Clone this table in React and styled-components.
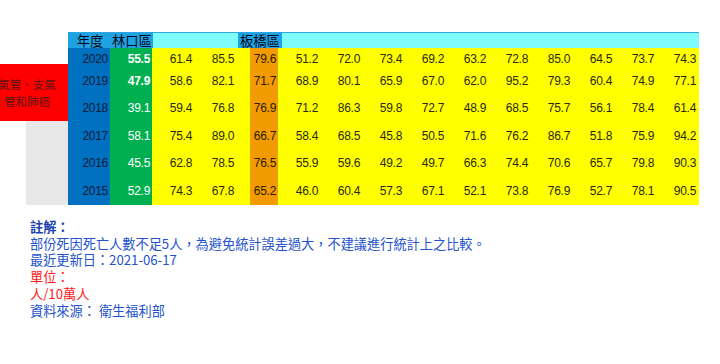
import styled, { createGlobalStyle } from 'styled-components'

const GlobalStyle = createGlobalStyle`
  body {
    margin: 0;
    background: #ffffff;
  }
`

const rows = [
  { year: 2020, lin: '55.5', bold: true, pre: ['61.4', '85.5'], ban: '79.6', rest: ['51.2', '72.0', '73.4', '69.2', '63.2', '72.8', '85.0', '64.5', '73.7', '74.3'], h: 21 },
  { year: 2019, lin: '47.9', bold: true, pre: ['58.6', '82.1'], ban: '71.7', rest: ['68.9', '80.1', '65.9', '67.0', '62.0', '95.2', '79.3', '60.4', '74.9', '77.1'], h: 24 },
  { year: 2018, lin: '39.1', pre: ['59.4', '76.8'], ban: '76.9', rest: ['71.2', '86.3', '59.8', '72.7', '48.9', '68.5', '75.7', '56.1', '78.4', '61.4'], h: 30 },
  { year: 2017, lin: '58.1', pre: ['75.4', '89.0'], ban: '66.7', rest: ['58.4', '68.5', '45.8', '50.5', '71.6', '76.2', '86.7', '51.8', '75.9', '94.2'], h: 26 },
  { year: 2016, lin: '45.5', pre: ['62.8', '78.5'], ban: '76.5', rest: ['55.9', '59.6', '49.2', '49.7', '66.3', '74.4', '70.6', '65.7', '79.8', '90.3'], h: 28 },
  { year: 2015, lin: '52.9', pre: ['74.3', '67.8'], ban: '65.2', rest: ['46.0', '60.4', '57.3', '67.1', '52.1', '73.8', '76.9', '52.7', '78.1', '90.5'], h: 28 },
]

const cellColors = {
  year: { bg: '#0070c0', fg: '#0d1a3a' },
  lin: { bg: '#00b050', fg: '#ffffff' },
  ban: { bg: '#f29b00', fg: '#2a1a00' },
  data: { bg: 'transparent', fg: '#2a2a10' },
}

export default function App() {
  return (
    <>
      <GlobalStyle />
      <Page>
        <Chart>
          <Side>
            <CauseBox>
              <span>氣管、支氣</span>
              <span>管和肺癌</span>
            </CauseBox>
            <GrayBox />
          </Side>
          <Table>
            <HeaderBar>
              <HeaderLabel width="85px">
                <HeadCell width="42px" center>年度</HeadCell>
                <HeadCell width="43px">林口區</HeadCell>
              </HeaderLabel>
              <HeaderGap width="85px" />
              <HeaderLabel width="44px">
                <HeadCell width="44px">板橋區</HeadCell>
              </HeaderLabel>
            </HeaderBar>
            <Body>
              {rows.map((r) => (
                <Row key={r.year} h={r.h}>
                  <Cell kind="year">{r.year}</Cell>
                  <Cell kind="lin" bold={r.bold}>{r.lin}</Cell>
                  {r.pre.map((v, i) => (
                    <Cell kind="data" key={'p' + i}>{v}</Cell>
                  ))}
                  <Spacer />
                  <Cell kind="ban">{r.ban}</Cell>
                  {r.rest.map((v, i) => (
                    <Cell kind="data" key={'r' + i}>{v}</Cell>
                  ))}
                </Row>
              ))}
            </Body>
          </Table>
        </Chart>
        <Notes>
          <NoteLine strong>註解：</NoteLine>
          <NoteLine>部份死因死亡人數不足5人，為避免統計誤差過大，不建議進行統計上之比較。</NoteLine>
          <NoteLine>最近更新日：2021-06-17</NoteLine>
          <NoteLine red>單位：</NoteLine>
          <NoteLine red>人/10萬人</NoteLine>
          <NoteLine>資料來源： 衛生福利部</NoteLine>
        </Notes>
      </Page>
    </>
  )
}

const Page = styled.div`
  width: 720px;
  height: 364px;
  overflow: hidden;
  font-family: 'Noto Sans CJK TC', 'Noto Sans', sans-serif;
`

const Chart = styled.div`
  display: flex;
  align-items: flex-start;
`

const Side = styled.div`
  width: 68px;
  padding-top: 64px;
  display: flex;
  flex-direction: column;
  align-items: flex-end;
`

const CauseBox = styled.div`
  width: 68px;
  height: 57px;
  background: #ff0000;
  overflow: hidden;
  box-sizing: border-box;
  padding-right: 14px;
  display: flex;
  flex-direction: column;
  align-items: center;
  justify-content: center;
  gap: 2px;
  font-size: 11.5px;
  line-height: 15px;
  color: #5c1414;
  white-space: nowrap;
`

const GrayBox = styled.div`
  width: 42px;
  height: 84px;
  background: #e8e8e8;
`

const Table = styled.div`
  padding-top: 32px;
  width: 631px;
`

const HeaderBar = styled.div`
  display: flex;
  height: 16px;
  background: #80fbfb;
  border-top: 1px solid #2aa6e0;
  box-sizing: border-box;
`

const HeaderLabel = styled.div`
  display: flex;
  width: ${(p) => p.width};
  background: #1fa2e2;
`

const HeaderGap = styled.div`
  width: ${(p) => p.width};
`

const HeadCell = styled.div`
  width: ${(p) => p.width};
  font-size: 13.3px;
  line-height: 15px;
  color: #0a0a20;
  text-align: ${(p) => (p.center ? 'center' : 'left')};
  padding-left: ${(p) => (p.center ? '2px' : '2px')};
  box-sizing: border-box;
  white-space: nowrap;
`

const Body = styled.div`
  background: #ffff00;
  display: flex;
  flex-direction: column;
`

const Row = styled.div`
  display: grid;
  grid-template-columns: 42px 42px 42px 42px 14px 28px repeat(10, 42px);
  height: ${(p) => p.h}px;
`

const Spacer = styled.div``

const Cell = styled.div`
  background: ${(p) => cellColors[p.kind].bg};
  color: ${(p) => cellColors[p.kind].fg};
  font-family: 'Liberation Sans', Arial, sans-serif;
  font-size: 12px;
  letter-spacing: -0.3px;
  font-weight: ${(p) => (p.bold ? 700 : 400)};
  display: flex;
  align-items: center;
  justify-content: flex-end;
  padding-right: 2px;
  white-space: nowrap;
`

const Notes = styled.div`
  padding: 14px 0 0 30px;
  display: flex;
  flex-direction: column;
`

const NoteLine = styled.div`
  font-size: 13.2px;
  line-height: 16.7px;
  color: ${(p) => (p.red ? '#ff1a1a' : p.strong ? '#1a3fb0' : '#2352cc')};
  font-weight: ${(p) => (p.strong ? 700 : 400)};
  white-space: nowrap;
`
